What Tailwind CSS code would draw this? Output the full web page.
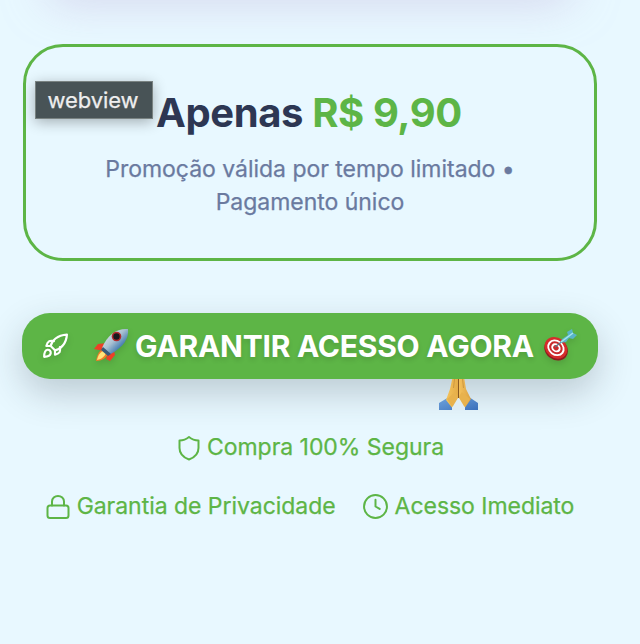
<!DOCTYPE html>
<html lang="pt-BR">
<head>
<meta charset="utf-8">
<meta name="viewport" content="width=device-width, initial-scale=1">
<title>Oferta</title>
<script src="https://cdn.jsdelivr.net/npm/@tailwindcss/browser@4"></script>
</head>
<body class="relative h-[644px] overflow-hidden bg-[#e8f8ff] font-['Inter',sans-serif] text-[#5db546]">
  <div class="absolute -top-[46px] left-[54px] h-[28px] w-[512px] rounded-3xl shadow-[0_12px_44px_8px_rgba(200,190,225,0.6)]"></div>
  <main class="flex w-[620px] flex-col items-center pt-[44px]">
    <section class="relative flex h-[217px] w-[574px] flex-col items-center rounded-[40px] border-[3px] border-[#5db546] bg-[#e8f8ff] pt-[41px] text-center">
      <h1 class="mr-[2px] whitespace-nowrap text-[40px] font-bold leading-[50px] tracking-[-0.4px] text-[#2d3753]">Apenas <span class="text-[#5db546]">R$ 9,90</span></h1>
      <p class="mt-[15px] whitespace-nowrap text-[23px] leading-[33px] tracking-[-0.03px] text-[#6a7a9f] [-webkit-text-stroke:0.25px_currentColor]">Promoção válida por tempo limitado •<br>Pagamento único</p>
      <div class="absolute left-[9px] top-[34px] flex h-[38px] w-[118px] items-center justify-center border border-[#798281] bg-[#485356] pr-[2px] text-[22px] tracking-[-0.1px] text-[#eeeeee] shadow-[0_3px_14px_rgba(0,0,0,0.3)] [-webkit-text-stroke:0.25px_currentColor]">webview</div>
    </section>
    <div class="relative mt-[52px] h-[66px] w-[576px]">
      <svg class="absolute left-[416px] top-[56px] z-10 h-[41px] w-[42px] [clip-path:inset(10px_0_0_0)]" viewBox="0 0 42 41">
        <defs><linearGradient id="skin"><stop stop-color="#f5c45c"/><stop offset=".46" stop-color="#e5ad48"/><stop offset=".5" stop-color="#8d5820"/><stop offset=".54" stop-color="#f3c05a"/><stop offset="1" stop-color="#dba143"/></linearGradient><linearGradient id="cuff" y2="1"><stop stop-color="#70a4dc"/><stop offset="1" stop-color="#3b70bb"/></linearGradient></defs>
        <path d="M1 34 11 28l9 7v6H1zM40 34 31 28l-9 7v6h18z" fill="url(#cuff)"/>
        <path d="M16 2h9l3 18 5 10-7 10-5.500-7-5.500 7-7-9 4-11z" fill="url(#skin)"/>
        <path d="M14 35 20.500 28 27 35V41H14z" fill="#dfedf4"/>
        <path d="M9 30 17 23l3.500 5-6 10zM32 30l-8-7-3.500 5 6 10z" fill="#e8b24d"/>
        <path d="M20.500 5v24" fill="none" stroke="#8b5920"/><path d="M16.500 10l-1 9M24.500 10l1 9" fill="none" stroke="#c28b38" stroke-width=".7"/>
      </svg>
      <button class="relative flex h-[66px] w-[576px] items-center rounded-[28px] bg-[#5db546] pl-[20px] text-[30px] font-bold text-white shadow-[0_14px_36px_rgba(40,50,60,0.23)]">
        <svg class="h-[26px] w-[26px] shrink-0 drop-shadow-md" viewBox="0 0 24 24" fill="none" stroke="currentColor" stroke-width="2" stroke-linecap="round" stroke-linejoin="round"><path d="M5 15.500C2.500 16 2 19 2 22c3 0 5.500-.5 6-3 .4-2-1-3.800-3-3.500z"/><path d="m12 16-4-4c1-5 6-10 15-10.500C22.500 10 17 15 12 16z"/><path d="M8 12H4s1-3.500 2.500-4.300C8 7 11 7.500 11 7.500M12 16v4s3.500-1 4.300-2.500c.7-1.500.2-4.500.2-4.500"/></svg>
        <svg class="ml-[25px] h-[36px] w-[36px] shrink-0 drop-shadow-md" viewBox="0 0 36 36">
          <defs><linearGradient id="hull" x1="0" y1="0" x2="1" y2="1"><stop stop-color="#f2f6f8"/><stop offset=".45" stop-color="#aac1d2"/><stop offset=".7" stop-color="#477eb2"/><stop offset="1" stop-color="#244d79"/></linearGradient></defs>
          <path d="M14 15 5 16 1 21l10 2zM21 23l1 4-5 6-4-2 2-6z" fill="#ed3f27"/>
          <path d="M10 21c-5 2-6 8-7 12 6 0 10-3 12-7z" fill="#f47927"/><path d="M10 23c-4 2-5 5-6 9 5-1 8-4 9-7z" fill="#ffe479"/>
          <path d="M35 1c1 9-4 18-19 26l-7-7C14 7 24 0 35 1z" fill="url(#hull)"/>
          <path d="m10 19 8 7-3 2-7-6z" fill="#385979"/>
          <circle cx="23.500" cy="8.500" r="4.800" fill="#b12a2d"/><circle cx="23.500" cy="8.500" r="3.200" fill="#17191f"/>
        </svg>
        <span class="ml-[6px] w-[400px] whitespace-nowrap text-left tracking-[-0.25px] [text-shadow:0_3px_5px_rgba(0,0,0,0.12)]">GARANTIR ACESSO AGORA</span>
        <svg class="ml-[7px] h-[34px] w-[36px] shrink-0 drop-shadow-md" viewBox="0 0 36 34">
          <g transform="rotate(38 13 20)"><ellipse cx="14" cy="19.500" rx="12.500" ry="10.500" fill="#8d1c20"/><ellipse cx="13" cy="18.500" rx="12" ry="10.200" fill="#d52c2b"/><ellipse cx="13" cy="18.500" rx="9.200" ry="7.700" fill="#fff"/><ellipse cx="13" cy="18.500" rx="7.200" ry="6" fill="#c92a2c"/><ellipse cx="13" cy="18.500" rx="5" ry="4.100" fill="#fff"/><ellipse cx="13" cy="18.500" rx="2.900" ry="2.400" fill="#c92a2c"/></g>
          <path d="m13 18 9-7" stroke="#5e7684" stroke-width="1.500"/>
          <path d="m18 14 2-4 6-4-1-3 5-3 1 4 4 2-4 4-4-1-3 4z" fill="#58b4ca"/><path d="m19 13 12-9" stroke="#a7e7ec" stroke-width="1.500"/>
        </svg>
      </button>
    </div>
    <div class="mt-[52px] flex h-[33px] items-center text-[23px] tracking-[-0.04px] [-webkit-text-stroke:0.25px_currentColor]">
      <div class="flex items-center gap-[5px] whitespace-nowrap"><svg class="h-[26px] w-[26px]" viewBox="0 0 26 26" fill="none" stroke="currentColor" stroke-width="2" stroke-linecap="round" stroke-linejoin="round"><path d="M13 2C10 4.500 7 5.400 3.500 5.400V13c0 6 4 9.500 9.500 11.500 5.500-2 9.500-5.500 9.500-11.500V5.400C19 5.400 16 4.500 13 2z"/></svg><span>Compra 100% Segura</span></div>
    </div>
    <div class="mt-[26px] flex h-[33px] items-center gap-[27px] text-[23px] tracking-[-0.04px] [-webkit-text-stroke:0.25px_currentColor]">
      <div class="flex items-center gap-[7px] whitespace-nowrap"><svg class="h-[24px] w-[24px]" viewBox="0 0 24 24" fill="none" stroke="currentColor" stroke-width="2" stroke-linecap="round" stroke-linejoin="round"><rect x="1.500" y="10.500" width="21" height="12.500" rx="2.500"/><path d="M6 10.500V6.500a6 5.500 0 0 1 12 0v4"/></svg><span>Garantia de Privacidade</span></div>
      <div class="flex items-center gap-[7px] whitespace-nowrap"><svg class="h-[25px] w-[25px]" viewBox="0 0 24 24" fill="none" stroke="currentColor" stroke-width="1.900" stroke-linecap="round" stroke-linejoin="round"><circle cx="12" cy="12" r="11"/><path d="M12 5.500V12l4 2.300"/></svg><span>Acesso Imediato</span></div>
    </div>
  </main>
</body>
</html>
